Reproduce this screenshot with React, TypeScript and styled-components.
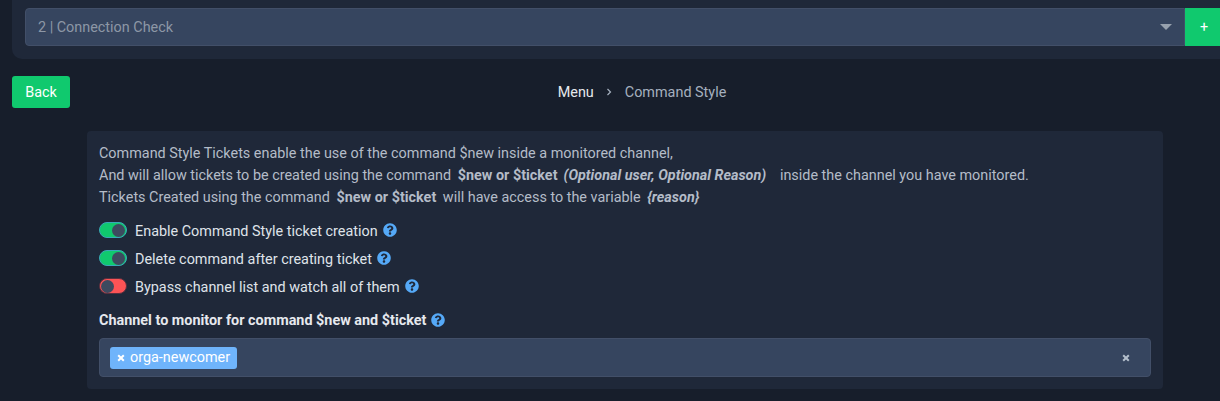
import React from "react";
import styled, { createGlobalStyle } from "styled-components";

const Global = createGlobalStyle`
  html, body { margin: 0; padding: 0; background: #171e2b; overflow: hidden; }
  body { font-family: Roboto, "Liberation Sans", sans-serif; font-size: 14.4px; color: #b4bcc8; }
`;
const Page = styled.div`
  width: 1220px; height: 401px; overflow: hidden; display: flex; flex-direction: column;
`;
const TopPanel = styled.div`
  margin-left: 12px; width: 1220px; height: 59px; box-sizing: border-box; flex: none;
  padding: 8px 0 0 13px; background: #1f2839; border-radius: 0 0 0 10px; display: flex; align-items: flex-start;
`;
const SelectBox = styled.div`
  width: 1160px; height: 38px; box-sizing: border-box; background: #36455f; border: 1px solid #424f68;
  border-radius: 4px 0 0 4px; display: flex; align-items: center; justify-content: space-between;
  padding: 0 12px; color: #8d97a6; flex: none;
`;
const Caret = styled.span`
  width: 0; height: 0; border-left: 6px solid transparent; border-right: 6px solid transparent;
  border-top: 6px solid #97a1ae; margin-top: -1px;
`;
const PlusButton = styled.div`
  width: 38px; height: 38px; background: #10c96e; color: #fff; display: flex; align-items: center;
  justify-content: center; flex: none;
`;
const NavRow = styled.div`
  display: flex; align-items: center; margin: 17px 0 0 12px; width: 1202px; height: 32px; flex: none;
`;
const BackButton = styled.div`
  width: 58px; height: 32px; background: #10c96e; color: #fff; border-radius: 3px; display: flex;
  align-items: center; justify-content: center; flex: none;
`;
const Crumbs = styled.div`
  flex: 1; display: flex; align-items: center; justify-content: center; color: #a5b0bf;
`;
const CrumbLink = styled.span` color: #e6e9ee; `;
const CrumbSep = styled.span`
  display: flex; margin: 0 12px 0 11px; color: #a5b0bf;
`;
const Card = styled.div`
  margin: 23px 0 0 87px; width: 1076px; height: 258px; box-sizing: border-box; flex: none;
  background: #1f2839; border-radius: 4px; padding: 12px 12px 0;
`;
const Intro = styled.div`
  line-height: 22px; color: #b4bcc8; white-space: pre;
`;
const Strong = styled.b`
  font-weight: 700; color: #b4bcc8; margin: 0 3px;
`;
const Toggles = styled.div`
  display: flex; flex-direction: column; gap: 8px; margin-top: 11px;
`;
const ToggleRow = styled.div`
  display: flex; align-items: center; height: 20px; color: #dfe3e9;
`;
const ToggleLabel = styled.span`
  margin-top: 2px;
`;
const Track = styled.span<{ $on: boolean }>`
  width: 28px; height: 16px; box-sizing: border-box; border-radius: 8px; margin-right: 8px; flex: none;
  background: ${p => (p.$on ? "#10c96e" : "#fc5355")};
  border: 1px solid ${p => (p.$on ? "#3aa8b8" : "#59303f")};
  display: flex; align-items: center; justify-content: ${p => (p.$on ? "flex-end" : "flex-start")};
  padding: 0 1px;
`;
const Knob = styled.span`
  width: 13px; height: 13px; border-radius: 50%; background: #3d4a5f; flex: none;
`;
const Help = styled.svg`
  width: 14px; height: 14px; margin-left: 5px; flex: none; color: #55a9f7;
`;
const FieldLabel = styled.div`
  display: flex; align-items: center; margin-top: 14px; height: 20px; font-weight: 700; color: #e6e9ee;
`;
const TagInput = styled.div`
  margin-top: 8px; height: 39px; box-sizing: border-box; background: #36455f; border: 1px solid #424f68; border-radius: 4px;
  display: flex; align-items: center; justify-content: space-between; padding: 0 20px 0 10px;
`;
const Tag = styled.span`
  height: 22px; background: #6fb4fb; color: #fff; border-radius: 3px; display: flex; align-items: center;
  padding: 0 7px; gap: 5px;
`;
const Cross = styled.svg<{ $c: string }>`
  width: 8px; height: 8px; color: ${p => p.$c}; flex: none;
`;

const HelpIcon = () => (
  <Help viewBox="0 0 512 512" aria-hidden>
    <path fill="currentColor" d="M504 256c0 137-111 248-248 248S8 393 8 256 119 8 256 8s248 111 248 248zM262.700 90c-54.500 0-89.200 23-116.500 63.700-3.500 5.300-2.300 12.400 2.700 16.300l34.700 26.300c5.200 3.900 12.600 3 16.700-2.100 17.900-22.700 30.100-35.800 57.300-35.800 20.400 0 45.700 13.100 45.700 32.900 0 15-12.400 22.700-32.600 34-23.600 13.200-54.800 29.700-54.800 70.900V300c0 6.600 5.400 12 12 12h56c6.600 0 12-5.400 12-12v-1.300c0-28.600 83.400-29.800 83.400-107.100C379.300 133.400 319 90 262.700 90zM256 339c-25.400 0-46 20.600-46 46s20.600 46 46 46 46-20.600 46-46-20.600-46-46-46z" />
  </Help>
);
const CrossIcon = ({ c }: { c: string }) => (
  <Cross $c={c} viewBox="0 0 8 8" aria-hidden>
    <path d="M1.200 1.200l5.600 5.600M6.800 1.200L1.200 6.800" stroke="currentColor" strokeWidth="2" fill="none" />
  </Cross>
);
const Toggle = ({ on, label }: { on: boolean; label: string }) => (
  <ToggleRow>
    <Track $on={on}><Knob /></Track>
    <ToggleLabel>{label}</ToggleLabel>
    <HelpIcon />
  </ToggleRow>
);

export default function App() {
  return (
    <Page>
      <Global />
      <TopPanel>
        <SelectBox>2 | Connection Check<Caret /></SelectBox>
        <PlusButton>+</PlusButton>
      </TopPanel>
      <NavRow>
        <BackButton>Back</BackButton>
        <Crumbs>
          <CrumbLink>Menu</CrumbLink>
          <CrumbSep>
            <svg width="8" height="8" viewBox="0 0 8 8" aria-hidden><path d="M2.500 1l3 3-3 3" stroke="currentColor" strokeWidth="1.200" fill="none" /></svg>
          </CrumbSep>
          Command Style
        </Crumbs>
      </NavRow>
      <Card>
        <Intro>
          <div>Command Style Tickets enable the use of the command $new inside a monitored channel,</div>
          <div>And will allow tickets to be created using the command <Strong>$new or $ticket</Strong><Strong><i>(Optional user, Optional Reason)</i></Strong>   inside the channel you have monitored.</div>
          <div>Tickets Created using the command <Strong>$new or $ticket</Strong> will have access to the variable <Strong><i>{"{reason}"}</i></Strong></div>
        </Intro>
        <Toggles>
          <Toggle on label="Enable Command Style ticket creation" />
          <Toggle on label="Delete command after creating ticket" />
          <Toggle on={false} label="Bypass channel list and watch all of them" />
        </Toggles>
        <FieldLabel>Channel to monitor for command $new and $ticket<HelpIcon /></FieldLabel>
        <TagInput>
          <Tag><CrossIcon c="#ffffff" />orga-newcomer</Tag>
          <CrossIcon c="#b4bfcc" />
        </TagInput>
      </Card>
    </Page>
  );
}
